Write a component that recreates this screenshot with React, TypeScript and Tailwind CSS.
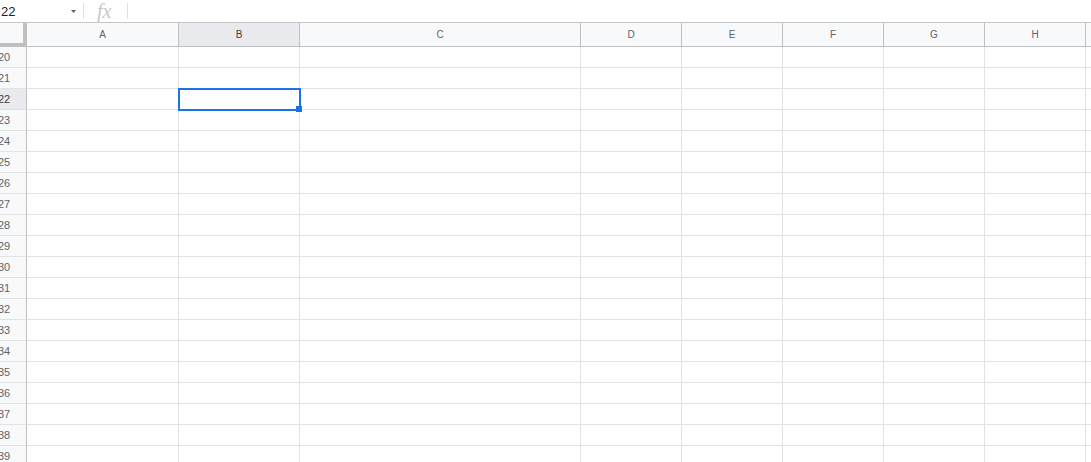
import React from "react";

const cols = [
  { id: "A", w: "w-[152px]" },
  { id: "B", w: "w-[121px]" },
  { id: "C", w: "w-[281px]" },
  { id: "D", w: "w-[101px]" },
  { id: "E", w: "w-[101px]" },
  { id: "F", w: "w-[101px]" },
  { id: "G", w: "w-[101px]" },
  { id: "H", w: "w-[101px]" },
];

const rows = Array.from({ length: 20 }, (_, i) => 20 + i);

function TopBar() {
  return (
    <div className="flex items-center h-[23px] border-b border-[#c7c7c7] bg-white">
      <div className="w-[83px] flex items-center h-full">
        <span className="pl-px text-[13px] text-[#202124] leading-none">22</span>
        <div className="ml-auto mr-[7px]">
          <svg width="5" height="3" viewBox="0 0 5 3">
            <path d="M0 0h5L2.5 3z" fill="#5f6368" />
          </svg>
        </div>
      </div>
      <div className="w-px h-[16px] bg-[#e0e0e0]" />
      <span className="ml-[13px] w-[30px] text-[20px] italic leading-[20px] text-[#c8c8c8] font-['Liberation_Serif',serif]">
        fx
      </span>
      <div className="w-px h-[16px] bg-[#e0e0e0]" />
    </div>
  );
}

function HeaderRow() {
  return (
    <div className="flex h-[24px]">
      <div className="w-[27px] shrink-0 h-full bg-[#f8f9fa] border-r-4 border-b-4 border-[#c0c0c0]" />
      {cols.map((c) => (
        <div
          key={c.id}
          className={`${c.w} shrink-0 h-full flex items-center justify-center text-[10px] border-r border-b border-[#c0c0c0] ${
            c.id === "B" ? "bg-[#e8eaed] text-[#3c4043]" : "bg-[#f8f9fa] text-[#5f6368]"
          }`}
        >
          {c.id}
        </div>
      ))}
      <div className="flex-1 h-full bg-[#f8f9fa] border-b border-[#c0c0c0]" />
    </div>
  );
}

function Row({ n }: { n: number }) {
  const sel = n === 22;
  return (
    <div className="flex h-[21px]">
      <div
        className={`w-[27px] shrink-0 h-full overflow-hidden flex items-center border-r border-r-[#c0c0c0] border-b border-b-[#e2e2e2] ${
          sel ? "bg-[#e8eaed] text-[#3c4043]" : "bg-[#f8f9fa] text-[#5f6368]"
        }`}
      >
        <span className="w-[46px] shrink-0 -ml-[19px] text-center text-[11px]">{n}</span>
      </div>
      {cols.map((c) => (
        <div
          key={c.id}
          className={`${c.w} shrink-0 h-full border-r border-b border-[#e2e2e2] relative`}
        >
          {sel && c.id === "B" && (
            <>
              <div className="absolute -left-px -top-px w-[123px] h-[23px] border-2 border-[#1a73e8] z-10" />
              <div className="absolute left-[117px] top-[17px] w-[6px] h-[6px] bg-[#1a73e8] z-20" />
            </>
          )}
        </div>
      ))}
      <div className="flex-1 h-full border-b border-[#e2e2e2]" />
    </div>
  );
}

export default function App() {
  return (
    <div className="w-[1091px] h-[462px] overflow-hidden bg-white font-['Liberation_Sans',Arial,sans-serif]">
      <TopBar />
      <HeaderRow />
      {rows.map((n) => (
        <Row key={n} n={n} />
      ))}
    </div>
  );
}
